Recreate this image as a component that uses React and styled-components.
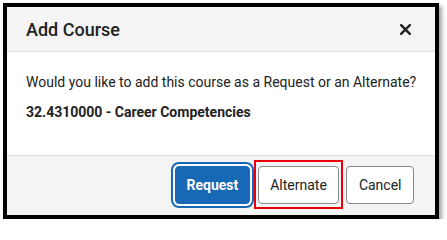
import React from 'react'
import styled, { createGlobalStyle } from 'styled-components'

const GlobalStyle = createGlobalStyle`
  html, body {
    margin: 0;
    padding: 0;
    background: #fff;
  }
  body {
    font-family: Roboto, "Liberation Sans", Arial, sans-serif;
    color: #222;
  }
`

const Page = styled.div`
  padding: 3px 0 0 3px;
`

const Dialog = styled.div`
  box-sizing: border-box;
  width: 436px;
  height: 216px;
  border: 4px solid #000;
  box-shadow: 3px 3px 4px rgba(0, 0, 0, 0.35);
  display: flex;
  flex-direction: column;
  background: #fff;
`

const Header = styled.div`
  height: 44px;
  padding: 0 19px;
  display: flex;
  align-items: center;
  justify-content: space-between;
  background: #f4f4f4;
  border-bottom: 1px solid #dcdcdc;
`

const Title = styled.h2`
  margin: 0;
  font-size: 18px;
  font-weight: 500;
  color: #222;
`

const CloseButton = styled.button`
  width: 16px;
  height: 16px;
  padding: 0;
  margin-right: 3px;
  border: none;
  background: none;
  display: flex;
  align-items: center;
  justify-content: center;
  cursor: pointer;
`

const Body = styled.div`
  flex: 1;
  padding: 20px 19px 0;
`

const Message = styled.p`
  margin: 0 0 10px;
  font-size: 14px;
  line-height: 20px;
  white-space: nowrap;
  font-weight: ${p => (p.$strong ? 700 : 400)};
`

const Footer = styled.div`
  height: 60px;
  box-sizing: border-box;
  padding: 10px 21px 0 0;
  display: flex;
  justify-content: flex-end;
  align-items: flex-start;
  gap: 7px;
  background: #f4f4f4;
  border-top: 1px solid #dcdcdc;
`

const Button = styled.button`
  position: relative;
  height: 38px;
  padding: 0 ${p => (p.$primary ? '10.5px' : '11.5px')};
  margin-right: ${p => (p.$primary ? '1px' : '0')};
  border-radius: 4px;
  font-family: inherit;
  font-size: 14px;
  cursor: pointer;
  border: 1px solid ${p => (p.$primary ? '#1768b5' : '#8a8a8a')};
  background: ${p => (p.$primary ? '#1768b5' : '#fff')};
  color: ${p => (p.$primary ? '#fff' : '#222')};
  font-weight: ${p => (p.$primary ? 700 : 400)};
  box-shadow: ${p => (p.$primary ? '0 0 0 2px #fff, 0 0 0 4px #1768b5' : 'none')};
`

const Highlight = styled.span`
  position: absolute;
  left: -5px;
  right: -5px;
  top: -7px;
  bottom: -6px;
  border: 2px solid #e8000b;
  pointer-events: none;
`

export default function App() {
  return (
    <>
      <GlobalStyle />
      <Page>
        <Dialog>
          <Header>
            <Title>Add Course</Title>
            <CloseButton aria-label="Close">
              <svg width="11" height="11" viewBox="0 0 11 11">
                <path d="M1.2 1.2 L9.8 9.8 M9.8 1.2 L1.2 9.8" stroke="#222" strokeWidth="2.4" strokeLinecap="square" />
              </svg>
            </CloseButton>
          </Header>
          <Body>
            <Message>Would you like to add this course as a Request or an Alternate?</Message>
            <Message $strong>32.4310000 - Career Competencies</Message>
          </Body>
          <Footer>
            <Button $primary>Request</Button>
            <Button>
              Alternate
              <Highlight />
            </Button>
            <Button>Cancel</Button>
          </Footer>
        </Dialog>
      </Page>
    </>
  )
}
